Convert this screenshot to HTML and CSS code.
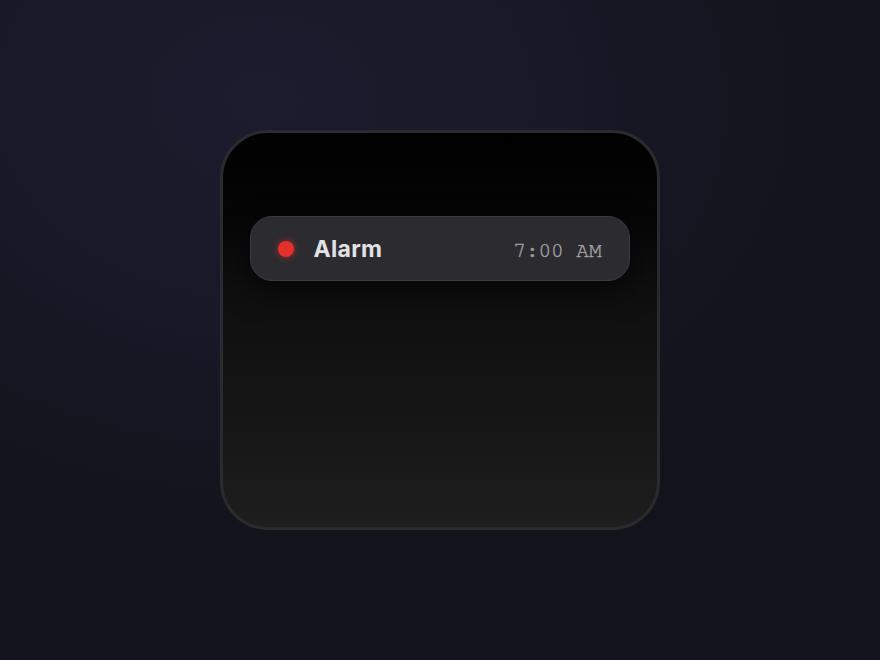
FILE: index.html
```html
<!DOCTYPE html>
<html>
<head>
<meta charset="utf-8">
<link rel="stylesheet" href="styles.css">
</head>
<body>
<div class="stage">
  <div class="card">
    <div class="pill">
      <span class="dot"></span>
      <span class="label">Alarm</span>
      <span class="time">7:00 AM</span>
    </div>
  </div>
</div>
</body>
</html>
```
FILE: styles.css
```css
html, body {
  margin: 0;
  padding: 0;
  width: 880px;
  height: 660px;
  overflow: hidden;
}
body {
  background: radial-gradient(ellipse 70% 70% at 30% 15%, #1d1c2f 0%, #181826 50%, #13131b 100%);
}
.stage {
  height: 660px;
  display: flex;
  justify-content: center;
  padding-top: 130px;
  box-sizing: border-box;
}
.card {
  width: 440px;
  height: 400px;
  box-sizing: border-box;
  border: 3px solid #2b2b2f;
  border-radius: 48px;
  background: linear-gradient(180deg, #000000 0%, #050505 20%, #0f0f0f 40%, #161616 75%, #1e1e1e 100%);
  padding: 83px 27px 0 27px;
  margin-left: -1px;
}
.pill {
  height: 65px;
  box-sizing: border-box;
  border: 1px solid #3c3b41;
  border-radius: 22px;
  background: #2c2b30;
  display: flex;
  align-items: center;
  padding: 0 27px 0 27px;
  box-shadow: 0 12px 30px rgba(0,0,0,0.55);
}
.dot {
  width: 16px;
  height: 16px;
  border-radius: 50%;
  background: #e3302b;
  box-shadow: 0 0 7px rgba(227,48,43,0.65);
  flex: none;
}
.label {
  margin-left: 20px;
  font-family: Inter, "Liberation Sans", sans-serif;
  font-weight: 700;
  font-size: 23px;
  color: #e2e2e4;
  letter-spacing: 0.3px;
}
.time {
  margin-left: auto;
  margin-top: 3px;
  font-family: "Nimbus Mono PS", "Nimbus Mono L", FreeMono, "Courier New", Courier, "Liberation Mono", monospace;
  font-size: 21px;
  color: #a2a2a6;
  letter-spacing: 0;
  -webkit-text-stroke: 0.4px #a2a2a6;
}
```
